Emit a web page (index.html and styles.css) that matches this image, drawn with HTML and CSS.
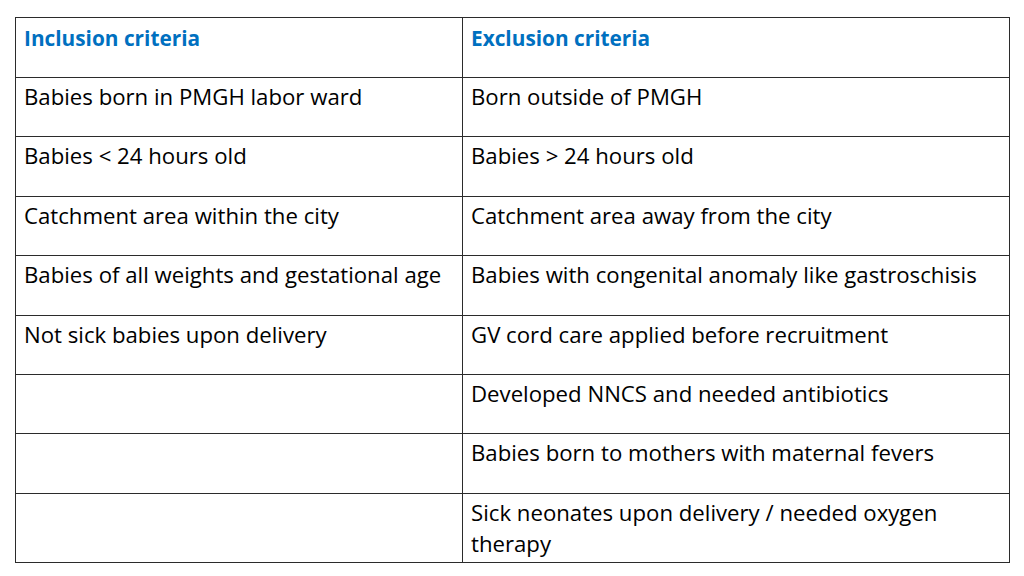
FILE: index.html
```html
<!DOCTYPE html>
<html lang="en">
<head>
<meta charset="utf-8">
<title>Inclusion and exclusion criteria</title>
<link rel="stylesheet" href="styles.css">
</head>
<body>
<table class="criteria">
  <colgroup><col class="col-in"><col class="col-ex"></colgroup>
  <thead>
    <tr><th>Inclusion criteria</th><th>Exclusion criteria</th></tr>
  </thead>
  <tbody>
    <tr><td>Babies born in PMGH labor ward</td><td>Born outside of PMGH</td></tr>
    <tr><td>Babies &lt; 24 hours old</td><td>Babies &gt; 24 hours old</td></tr>
    <tr><td>Catchment area within the city</td><td>Catchment area away from the city</td></tr>
    <tr><td>Babies of all weights and gestational age</td><td>Babies with congenital anomaly like gastroschisis</td></tr>
    <tr><td>Not sick babies upon delivery</td><td>GV cord care applied before recruitment</td></tr>
    <tr><td></td><td>Developed NNCS and needed antibiotics</td></tr>
    <tr><td></td><td>Babies born to mothers with maternal fevers</td></tr>
    <tr class="last"><td></td><td>Sick neonates upon delivery / needed oxygen therapy</td></tr>
  </tbody>
</table>
</body>
</html>
```
FILE: styles.css
```css
html, body {
  margin: 0;
  padding: 0;
  background: #ffffff;
}
body {
  padding: 17px 0 0 15px;
  font-family: "Open Sans", Lato, sans-serif;
  color: #000;
}
.criteria {
  border-collapse: collapse;
  table-layout: fixed;
  width: 994px;
}
.col-in { width: 447px; }
.col-ex { width: 547px; }
.criteria th,
.criteria td {
  border: 1px solid #2b2b2b;
  padding: 3px 8px 0 8px;
  vertical-align: top;
  text-align: left;
  font-size: 22.2px;
  line-height: 31px;
  height: 59.4px;
  box-sizing: border-box;
}
.criteria th {
  color: #0070c0;
  font-weight: 700;
  font-size: 20.8px;
  padding-top: 5px;
  height: 60px;
}
.criteria .last td {
  height: 69px;
}
```
